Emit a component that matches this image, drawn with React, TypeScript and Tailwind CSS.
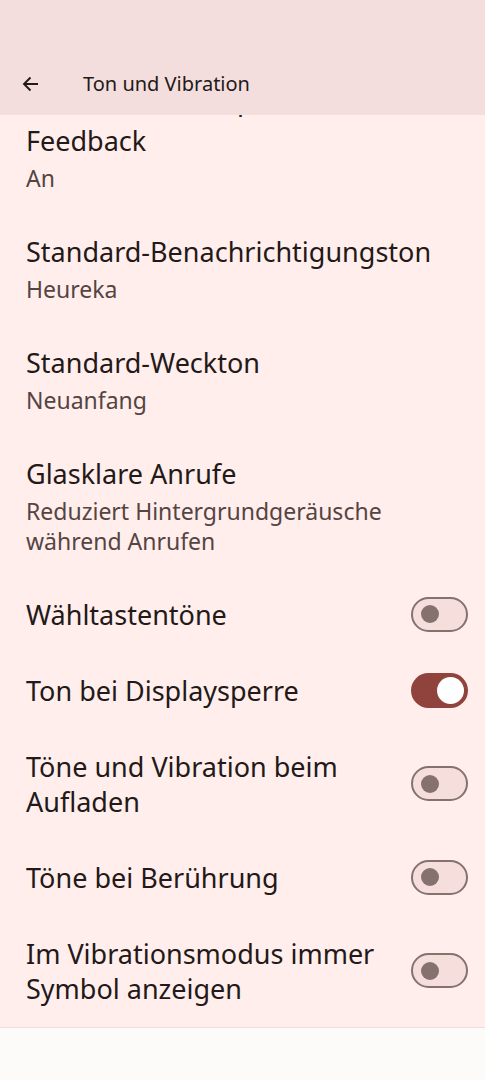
import React from "react";

type Item =
  | { kind: "text"; title: string[]; summary: string }
  | { kind: "toggle"; title: string; on: boolean };

const items: Item[] = [
  { kind: "text", title: ["Vibration und haptisches", "Feedback"], summary: "An" },
  { kind: "text", title: ["Standard-Benachrichtigungston"], summary: "Heureka" },
  { kind: "text", title: ["Standard-Weckton"], summary: "Neuanfang" },
  {
    kind: "text",
    title: ["Glasklare Anrufe"],
    summary: "Reduziert Hintergrundgeräusche während Anrufen",
  },
  { kind: "toggle", title: "Wähltastentöne", on: false },
  { kind: "toggle", title: "Ton bei Displaysperre", on: true },
  { kind: "toggle", title: "Töne und Vibration beim Aufladen", on: false },
  { kind: "toggle", title: "Töne bei Berührung", on: false },
  { kind: "toggle", title: "Im Vibrationsmodus immer Symbol anzeigen", on: false },
];

const Switch = ({ on }: { on: boolean }) =>
  on ? (
    <div className="flex h-[35px] w-[57px] shrink-0 items-center justify-end rounded-full bg-[#8f433c] pr-[4px]">
      <div className="h-[27px] w-[27px] rounded-full bg-white" />
    </div>
  ) : (
    <div className="flex h-[35px] w-[57px] shrink-0 items-center rounded-full border-2 border-[#85726f] bg-[#f5dedb] pl-[8px]">
      <div className="h-[18px] w-[18px] rounded-full bg-[#85726f]" />
    </div>
  );

export default function App() {
  return (
    <div
      className="flex h-[1080px] w-[485px] flex-col overflow-hidden bg-[#fdfbfa] text-[#231918]"
      style={{ fontFamily: "'Noto Sans', Roboto, sans-serif" }}
    >
      <div className="flex h-[115px] shrink-0 items-end bg-[#f3dedd] pb-[11px]">
        <div className="flex h-[40px] w-[60px] items-center pl-[22px]">
          <svg width="17" height="16" viewBox="0 0 17 16" fill="none">
            <path d="M16 8H2M8.5 1.5L2 8l6.5 6.5" stroke="#231918" strokeWidth="1.9" />
          </svg>
        </div>
        <div className="flex h-[40px] items-center pl-[23px] text-[20px]">Ton und Vibration</div>
      </div>

      {/* scrolled list, first row partly under the app bar */}
      <div className="h-[913px] shrink-0 overflow-hidden border-b border-[#ecdfde] bg-[#ffeeec]">
        <div className="-mt-[53.5px] flex flex-col">
          {items.map((it, i) =>
            it.kind === "text" ? (
              <div key={i} className="px-[26px] pb-[21px] pt-[20px]">
                {it.title.map((t, j) => (
                  <div
                    key={t}
                    className={
                      i === 0 && j === 0
                        ? "mb-[6px] text-[27px] leading-[35px]"
                        : "text-[27px] leading-[35px]"
                    }
                  >
                    {t}
                  </div>
                ))}
                <div className="mt-[5px] pr-[60px] text-[23px] leading-[30px] text-[#554442]">
                  {it.summary}
                </div>
              </div>
            ) : (
              <div key={i} className="flex items-center gap-4 pb-[21px] pl-[26px] pr-[17px] pt-[20px]">
                <div className="flex-1 text-[27px] leading-[35px]">{it.title}</div>
                <Switch on={it.on} />
              </div>
            )
          )}
        </div>
      </div>
    </div>
  );
}
